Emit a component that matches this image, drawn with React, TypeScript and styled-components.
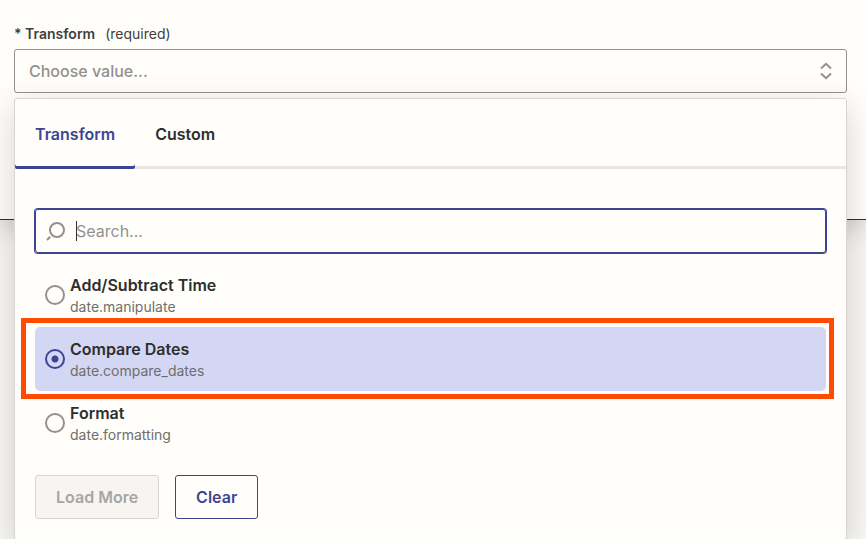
import React, { useState } from "react";
import styled, { createGlobalStyle } from "styled-components";

const color = {
  paper: "#fffefa",
  ground: "#f8f7f4",
  ink: "#2d2e2e",
  text: "#403f3e",
  muted: "#939190",
  subtle: "#6f6e6c",
  line: "#d7d5d2",
  rule: "#e8e7e4",
  accent: "#3d4592",
  selected: "#d3d7f4",
  callout: "#ff4a00",
};

const GlobalStyle = createGlobalStyle`
  *, *::before, *::after { box-sizing: border-box; }
  html { height: 100%; }
  body {
    margin: 0;
    min-height: 100%;
    overflow: hidden;
    background: ${color.ground};
    color: ${color.ink};
    font-family: Inter, "Liberation Sans", sans-serif;
    font-size: 16px;
    line-height: 24px;
  }
  button, input { font: inherit; color: inherit; margin: 0; }
`;

const Section = styled.section`
  padding: 24px 19px 126px 14px;
  background: ${color.paper};
  border-bottom: 1px solid ${color.ink};
  box-shadow: 0 8px 24px rgba(45, 46, 46, 0.2);
`;

const FieldLabel = styled.div`
  display: flex;
  gap: 10px;
  margin-bottom: 5px;
  font-size: 14px;
  line-height: 20px;
  color: ${color.text};
`;

const FieldName = styled.label`
  font-weight: 600;
  white-space: pre;
`;

const Dropdown = styled.div`
  position: relative;
`;

const SelectBox = styled.button`
  display: flex;
  align-items: center;
  justify-content: space-between;
  width: 100%;
  height: 44px;
  padding: 0 14px;
  border: 1px solid ${color.muted};
  border-radius: 3px;
  background: ${color.paper};
  color: ${color.muted};
  font-weight: 500;
  text-align: left;
`;

const Menu = styled.div`
  position: absolute;
  top: 100%;
  left: 0;
  right: 0;
  margin-top: 5px;
  border: 1px solid ${color.line};
  border-radius: 3px;
  background: ${color.paper};
  box-shadow: 0 8px 32px rgba(45, 46, 46, 0.2);
`;

const Tabs = styled.div`
  display: flex;
  box-shadow: inset 0 -3px ${color.rule};
`;

const Tab = styled.button<{ $active: boolean }>`
  height: 70px;
  padding: 0 20px;
  border: 0;
  border-radius: 2px;
  background: none;
  box-shadow: ${(p) => (p.$active ? `inset 0 -3px ${color.accent}` : "none")};
  color: ${(p) => (p.$active ? color.accent : color.ink)};
  font-weight: 600;
`;

const MenuBody = styled.div`
  padding: 40px 20px 20px;
`;

const SearchBox = styled.label`
  position: relative;
  display: flex;
  align-items: center;
  gap: 10px;
  height: 44px;
  padding: 0 10px;
  border: 1px solid ${color.accent};
  border-radius: 3px;
  box-shadow: 0 0 0 1px ${color.accent};
`;

const SearchInput = styled.input`
  flex: 1;
  min-width: 0;
  padding: 0;
  border: 0;
  outline: 0;
  background: none;
  caret-color: transparent;
  &::placeholder { color: ${color.muted}; opacity: 1; }
`;

const Caret = styled.span`
  position: absolute;
  left: 40px;
  top: 11px;
  width: 1px;
  height: 20px;
  background: ${color.ink};
`;

const Options = styled.div`
  padding-top: 10px;
`;

const Option = styled.label<{ $selected: boolean }>`
  position: relative;
  display: flex;
  align-items: center;
  gap: 5px;
  height: 64px;
  padding: 0 10px;
  border-radius: 5px;
  background: ${(p) => (p.$selected ? color.selected : "none")};
`;

const Callout = styled.span`
  position: absolute;
  inset: -9px -8px -8px -14px;
  border: 5px solid ${color.callout};
  pointer-events: none;
`;

const Radio = styled.input`
  appearance: none;
  flex: none;
  width: 20px;
  height: 20px;
  border: 2px solid ${color.muted};
  border-radius: 50%;
  background: ${color.paper};
  &:checked {
    border-color: ${color.accent};
    background: radial-gradient(circle, ${color.accent} 3px, transparent 4px);
  }
`;

const OptionText = styled.span`
  display: flex;
  flex-direction: column;
`;

const OptionName = styled.span`
  font-weight: 600;
`;

const OptionKey = styled.span`
  font-size: 14px;
  line-height: 20px;
  color: ${color.subtle};
`;

const Actions = styled.div`
  display: flex;
  gap: 16px;
  padding-top: 20px;
`;

const ActionButton = styled.button`
  height: 44px;
  padding: 0 20px;
  border: 1px solid ${color.accent};
  border-radius: 3px;
  background: ${color.paper};
  color: ${color.accent};
  font-weight: 600;
  &:disabled {
    border-color: ${color.line};
    background: #f6f5f2;
    color: #a8a5a2;
  }
`;

const ChevronsIcon = () => (
  <svg width="12" height="18" viewBox="0 0 12 18" fill="none" stroke="currentColor" strokeWidth="2" aria-hidden="true">
    <path d="M1 6.5 6 1.8 11 6.5M1 11.5 6 16.2 11 11.5" />
  </svg>
);

const SearchIcon = () => (
  <svg width="20" height="20" viewBox="0 0 20 20" fill="none" stroke={color.muted} strokeWidth="2" aria-hidden="true">
    <circle cx="11" cy="9" r="7" />
    <path d="M4.2 15.8 1 19" />
  </svg>
);

const options = [
  { name: "Add/Subtract Time", key: "date.manipulate" },
  { name: "Compare Dates", key: "date.compare_dates" },
  { name: "Format", key: "date.formatting" },
];

export default function App() {
  const [tab, setTab] = useState("Transform");
  const [selected, setSelected] = useState("date.compare_dates");
  const [query, setQuery] = useState("");

  return (
    <>
      <GlobalStyle />
      <Section>
        <FieldLabel>
          <FieldName htmlFor="transform">* Transform</FieldName>
          <span>(required)</span>
        </FieldLabel>
        <Dropdown>
          <SelectBox id="transform" type="button" aria-haspopup="dialog" aria-expanded="true">
            Choose value...
            <ChevronsIcon />
          </SelectBox>
          <Menu>
            <Tabs role="tablist">
              {["Transform", "Custom"].map((name) => (
                <Tab key={name} type="button" role="tab" aria-selected={tab === name} $active={tab === name} onClick={() => setTab(name)}>
                  {name}
                </Tab>
              ))}
            </Tabs>
            <MenuBody>
              <SearchBox>
                <SearchIcon />
                <SearchInput
                  type="text"
                  aria-label="Search"
                  placeholder="Search..."
                  value={query}
                  onChange={(e) => setQuery(e.target.value)}
                />
                {query === "" && <Caret />}
              </SearchBox>
              <Options role="radiogroup" aria-label="Transform">
                {options.map((o) => (
                  <Option key={o.key} $selected={selected === o.key}>
                    <Radio type="radio" name="transform" checked={selected === o.key} onChange={() => setSelected(o.key)} />
                    <OptionText>
                      <OptionName>{o.name}</OptionName>
                      <OptionKey>{o.key}</OptionKey>
                    </OptionText>
                    {selected === o.key && <Callout />}
                  </Option>
                ))}
              </Options>
              <Actions>
                <ActionButton type="button" disabled>Load More</ActionButton>
                <ActionButton type="button" onClick={() => setSelected("")}>Clear</ActionButton>
              </Actions>
            </MenuBody>
          </Menu>
        </Dropdown>
      </Section>
    </>
  );
}
